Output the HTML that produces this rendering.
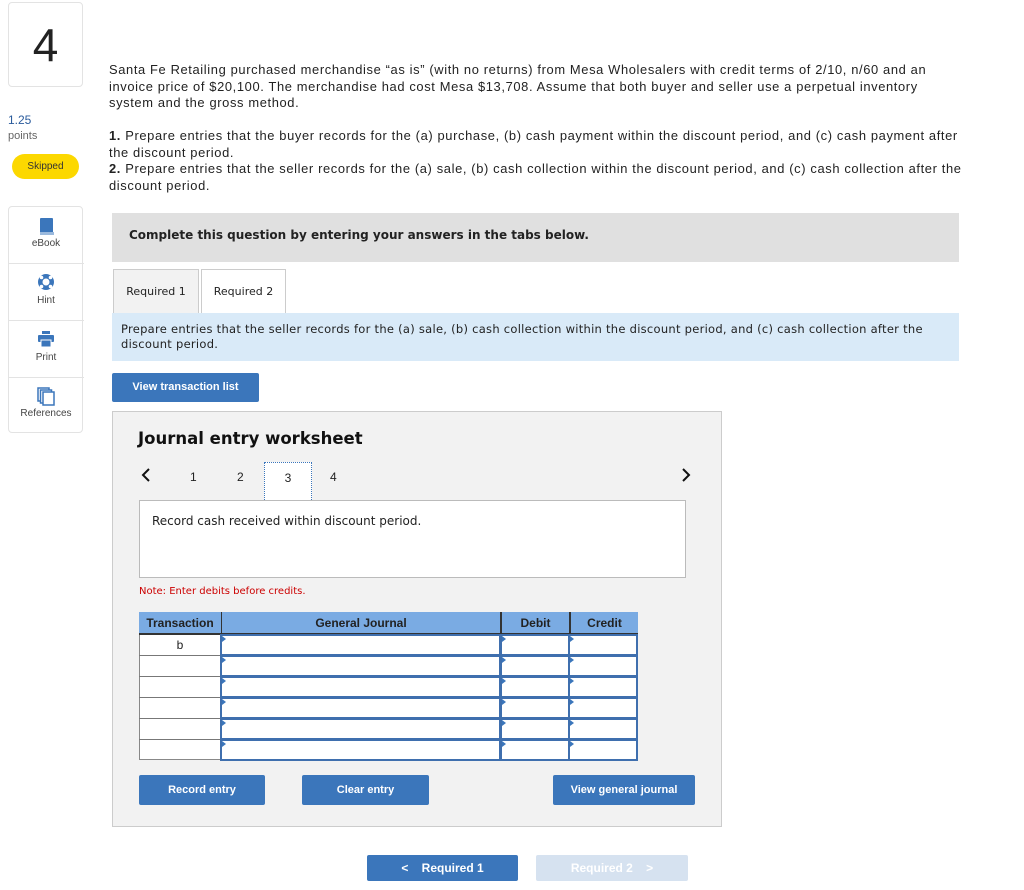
<!DOCTYPE html>
<html><head><meta charset="utf-8"><style>
*{box-sizing:border-box;margin:0;padding:0}
body{width:1024px;height:890px;position:relative;background:#fff;font-family:"Liberation Sans",sans-serif;color:#222;overflow:hidden}
.a{position:absolute}
.v{font-family:"DejaVu Sans","Liberation Sans",sans-serif}
.btn{position:absolute;background:#3b76bb;color:#fff;font-weight:bold;font-size:11px;text-align:center;border-radius:2px}
.side div{position:absolute;left:0;width:74px;text-align:center;font-size:10px;color:#444}
.cell{position:absolute;background:#fff;border:2px solid #3f6fae}
.tri{position:absolute;width:0;height:0;border-top:3px solid transparent;border-bottom:3px solid transparent;border-left:4px solid #3b76bb}
.ln{position:absolute;left:109px;white-space:nowrap;font-size:12.9px;letter-spacing:0.63px;color:#222}
</style></head><body>
<div class="a" style="left:8px;top:2px;width:75px;height:85px;border:1px solid #e3e3e3;border-radius:4px;text-align:center;font-size:46px;line-height:85px;color:#222">4</div>
<div class="a" style="left:8px;top:113px;font-size:12px;color:#2a5b9c">1.25</div>
<div class="a" style="left:8px;top:130px;font-size:11px;color:#666">points</div>
<div class="a" style="left:12px;top:154px;width:67px;height:25px;background:#fcd800;border-radius:13px;font-size:10px;text-align:center;line-height:25px;color:#333">Skipped</div>
<div class="a side" style="left:8px;top:206px;width:75px;height:227px;border:1px solid #e3e3e3;border-radius:4px">
 <div style="top:10px"><svg width="18" height="20"><rect x="3" y="1" width="13" height="15" rx="1" fill="#3b76bb"/><rect x="3" y="15" width="14" height="3" fill="#9ab9dd"/></svg></div>
 <div style="top:31px">eBook</div>
 <div style="top:56px;height:1px;background:#e3e3e3;width:75px"></div>
 <div style="top:66px"><svg width="18" height="18"><circle cx="9" cy="9" r="8" fill="#3b76bb"/><circle cx="9" cy="9" r="3.5" fill="#fff"/><circle cx="4.5" cy="4.5" r="1.8" fill="#fff"/><circle cx="13.5" cy="4.5" r="1.8" fill="#fff"/><circle cx="4.5" cy="13.5" r="1.8" fill="#fff"/><circle cx="13.5" cy="13.5" r="1.8" fill="#fff"/></svg></div>
 <div style="top:88px">Hint</div>
 <div style="top:113px;height:1px;background:#e3e3e3;width:75px"></div>
 <div style="top:123px"><svg width="18" height="18"><rect x="5" y="1" width="8" height="3" fill="#3b76bb"/><rect x="1" y="5" width="16" height="7" rx="1" fill="#3b76bb"/><rect x="4" y="10" width="10" height="7" fill="#3b76bb" stroke="#fff" stroke-width="1"/></svg></div>
 <div style="top:145px">Print</div>
 <div style="top:170px;height:1px;background:#e3e3e3;width:75px"></div>
 <div style="top:180px"><svg width="18" height="19"><rect x="1" y="1" width="11" height="13" fill="#fff" stroke="#3b76bb" stroke-width="1.5"/><rect x="3.5" y="3" width="11" height="13" fill="#fff" stroke="#3b76bb" stroke-width="1.5"/><rect x="6" y="5" width="11" height="13" fill="#fff" stroke="#3b76bb" stroke-width="1.5"/></svg></div>
 <div style="top:201px">References</div>
</div>
<div class="ln" style="top:62px">Santa Fe Retailing purchased merchandise “as is” (with no returns) from Mesa Wholesalers with credit terms of 2/10, n/60 and an</div>
<div class="ln" style="top:79px">invoice price of $20,100. The merchandise had cost Mesa $13,708. Assume that both buyer and seller use a perpetual inventory</div>
<div class="ln" style="top:95px">system and the gross method.</div>
<div class="ln" style="top:128px"><b>1.</b> Prepare entries that the buyer records for the (a) purchase, (b) cash payment within the discount period, and (c) cash payment after</div>
<div class="ln" style="top:145px">the discount period.</div>
<div class="ln" style="top:161px"><b>2.</b> Prepare entries that the seller records for the (a) sale, (b) cash collection within the discount period, and (c) cash collection after the</div>
<div class="ln" style="top:178px">discount period.</div>
<div class="a v" style="left:112px;top:213px;width:847px;height:49px;background:#e0e0e0;font-size:12px;font-weight:bold;padding:15px 0 0 17px;color:#222">Complete this question by entering your answers in the tabs below.</div>
<div class="a v" style="left:113px;top:269px;width:86px;height:45px;background:#f2f2f2;border:1px solid #ccc;border-bottom:none;font-size:11px;text-align:center;line-height:44px">Required 1</div>
<div class="a v" style="left:201px;top:269px;width:85px;height:45px;background:#fff;border:1px solid #ccc;border-bottom:none;font-size:11px;text-align:center;line-height:44px">Required 2</div>
<div class="a v" style="left:112px;top:313px;width:847px;height:48px;background:#d9eaf8;font-size:11.5px;letter-spacing:0.27px;line-height:15px;padding:9px 0 0 9px;color:#222;white-space:nowrap">Prepare entries that the seller records for the (a) sale, (b) cash collection within the discount period, and (c) cash collection after the<br>discount period.</div>
<div class="btn" style="left:112px;top:373px;width:147px;height:29px;line-height:29px">View transaction list</div>
<div class="a" style="left:112px;top:411px;width:610px;height:416px;background:#f2f2f2;border:1px solid #ccc"></div>
<div class="a v" style="left:138px;top:429px;font-size:16.5px;font-weight:bold;color:#111">Journal entry worksheet</div>
<div class="a" style="left:140px;top:466px"><svg width="12" height="18"><path d="M9 3 L3 9 L9 15" fill="none" stroke="#111" stroke-width="2"/></svg></div>
<div class="a" style="left:680px;top:466px"><svg width="12" height="18"><path d="M3 3 L9 9 L3 15" fill="none" stroke="#111" stroke-width="2"/></svg></div>
<div class="a" style="left:190px;top:470px;font-size:12px">1</div>
<div class="a" style="left:237px;top:470px;font-size:12px">2</div>
<div class="a" style="left:264px;top:462px;width:48px;height:40px;background:#fff;border:1px dotted #3b76bb;font-size:12px;text-align:center;padding-top:8px">3</div>
<div class="a" style="left:330px;top:470px;font-size:12px">4</div>
<div class="a v" style="left:139px;top:500px;width:547px;height:78px;background:#fff;border:1px solid #bbb;font-size:12px;padding:13px 0 0 12px">Record cash received within discount period.</div>
<div class="a v" style="left:139px;top:586px;font-size:10px;color:#c00">Note: Enter debits before credits.</div>
<div class="a" style="left:139px;top:612px;width:499px;height:148px;background:#fff;border:1px solid #888"></div>
<div class="a" style="left:139px;top:612px;width:499px;height:23px;background:#7aabe3;border-bottom:2px solid #333"></div>
<div class="a" style="left:139px;top:612px;width:82px;height:22px;font-size:12px;font-weight:bold;text-align:center;line-height:22px;color:#222">Transaction</div>
<div class="a" style="left:221px;top:612px;width:279px;height:22px;font-size:12px;font-weight:bold;text-align:center;line-height:22px;color:#222;border-left:1px solid #333">General Journal</div>
<div class="a" style="left:500px;top:612px;width:69px;height:22px;font-size:12px;font-weight:bold;text-align:center;line-height:22px;color:#222;border-left:2px solid #333">Debit</div>
<div class="a" style="left:569px;top:612px;width:69px;height:22px;font-size:12px;font-weight:bold;text-align:center;line-height:22px;color:#222;border-left:2px solid #333">Credit</div>
<div class="a" style="left:139px;top:636px;width:82px;height:19px;font-size:12px;text-align:center;line-height:19px">b</div>
<div class="a" style="left:139px;top:655px;width:82px;height:1px;background:#777"></div>
<div class="a" style="left:139px;top:676px;width:82px;height:1px;background:#777"></div>
<div class="a" style="left:139px;top:697px;width:82px;height:1px;background:#777"></div>
<div class="a" style="left:139px;top:718px;width:82px;height:1px;background:#777"></div>
<div class="a" style="left:139px;top:739px;width:82px;height:1px;background:#777"></div>
<div id="rows"></div>
<script>
var h='';for(var i=0;i<6;i++){var y=634+i*21;[[220,281],[500,70],[568,70]].forEach(function(c){h+='<div class="cell" style="left:'+c[0]+'px;top:'+y+'px;width:'+c[1]+'px;height:22px"></div><div class="tri" style="left:'+(c[0]+2)+'px;top:'+(y+2)+'px"></div>';});}
document.getElementById('rows').innerHTML=h;
</script>
<div class="btn" style="left:139px;top:775px;width:126px;height:30px;line-height:30px">Record entry</div>
<div class="btn" style="left:302px;top:775px;width:127px;height:30px;line-height:30px">Clear entry</div>
<div class="btn" style="left:553px;top:775px;width:142px;height:30px;line-height:30px">View general journal</div>
<div class="btn" style="left:367px;top:855px;width:151px;height:26px;line-height:26px;font-size:12px">&lt;&nbsp;&nbsp;&nbsp; Required 1</div>
<div class="btn" style="left:536px;top:855px;width:152px;height:26px;line-height:26px;font-size:12px;background:#d6e2f0">Required 2&nbsp;&nbsp;&nbsp; &gt;</div>
</body></html>
